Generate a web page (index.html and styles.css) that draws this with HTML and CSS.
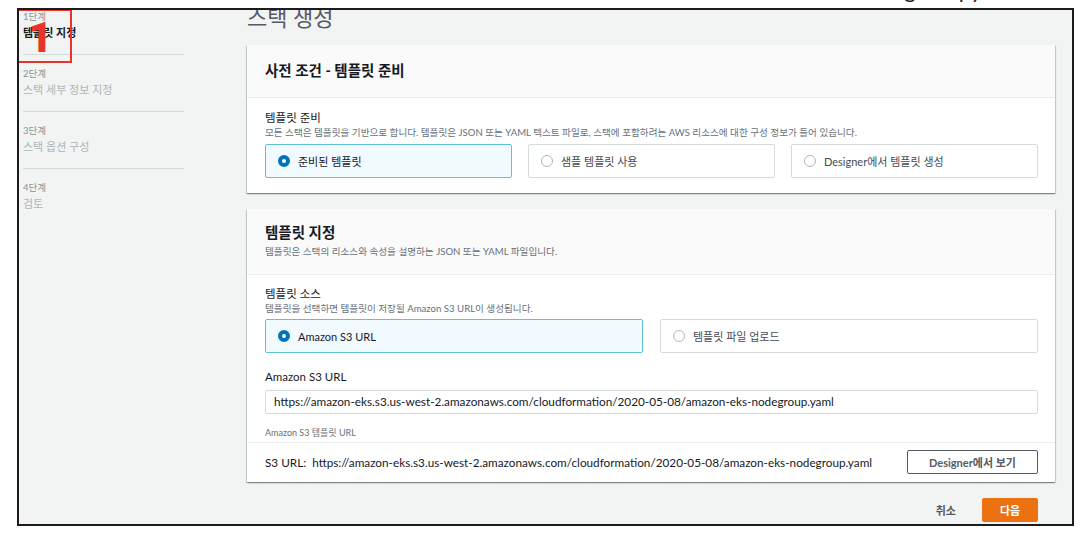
FILE: index.html
```html
<!DOCTYPE html>
<html lang="ko">
<head>
  <meta charset="UTF-8">
  <title>스택 생성</title>
  <link rel="stylesheet" href="styles.css">
</head>
<body>

  <div class="cut-line"><span>using the python</span></div>

  <div class="shot">
    <div class="marker">1</div>

    <ul class="steps">
      <li class="step active">
        <span class="step-no">1단계</span>
        <span class="step-name">템플릿 지정</span>
      </li>
      <li class="step">
        <span class="step-no">2단계</span>
        <span class="step-name">스택 세부 정보 지정</span>
      </li>
      <li class="step">
        <span class="step-no">3단계</span>
        <span class="step-name">스택 옵션 구성</span>
      </li>
      <li class="step last">
        <span class="step-no">4단계</span>
        <span class="step-name">검토</span>
      </li>
    </ul>

    <div class="main">
      <h1>스택 생성</h1>

      <section class="card">
        <div class="card-head">
          <h2>사전 조건 - 템플릿 준비</h2>
        </div>
        <div class="card-body first">
          <div class="label">템플릿 준비</div>
          <div class="hint">모든 스택은 템플릿을 기반으로 합니다. 템플릿은 JSON 또는 YAML 텍스트 파일로, 스택에 포함하려는 AWS 리소스에 대한 구성 정보가 들어 있습니다.</div>
          <div class="tiles three">
            <div class="tile selected"><span class="radio"></span>준비된 템플릿</div>
            <div class="tile"><span class="radio"></span>샘플 템플릿 사용</div>
            <div class="tile"><span class="radio"></span>Designer에서 템플릿 생성</div>
          </div>
        </div>
      </section>

      <section class="card second">
        <div class="card-head">
          <h2>템플릿 지정</h2>
          <div class="hint head-hint">템플릿은 스택의 리소스와 속성을 설명하는 JSON 또는 YAML 파일입니다.</div>
        </div>
        <div class="card-body">
          <div class="label">템플릿 소스</div>
          <div class="hint">템플릿을 선택하면 템플릿이 저장될 Amazon S3 URL이 생성됩니다.</div>
          <div class="tiles two">
            <div class="tile selected"><span class="radio"></span>Amazon S3 URL</div>
            <div class="tile"><span class="radio"></span>템플릿 파일 업로드</div>
          </div>

          <div class="label field-label">Amazon S3 URL</div>
          <div class="url-input">https://amazon-eks.s3.us-west-2.amazonaws.com/cloudformation/2020-05-08/amazon-eks-nodegroup.yaml</div>
          <div class="helper">Amazon S3 템플릿 URL</div>
        </div>
        <div class="card-foot">
          <span class="s3-url">S3 URL:&nbsp; https://amazon-eks.s3.us-west-2.amazonaws.com/cloudformation/2020-05-08/amazon-eks-nodegroup.yaml</span>
          <button class="btn-outline">Designer에서 보기</button>
        </div>
      </section>

      <div class="actions">
        <span class="cancel">취소</span>
        <button class="btn-primary">다음</button>
      </div>
    </div>
  </div>

</body>
</html>
```

FILE: styles.css
```css
body {
  margin: 0;
  background: #fff;
  font-family: 'Lato', 'Noto Sans CJK KR', sans-serif;
  color: #16191f;
}
.cut-line {
  height: 8px;
  overflow: hidden;
  padding-left: 865px;
  font-size: 22px;
  line-height: 22px;
  color: #222;
}
.cut-line span {
  display: block;
  margin-top: -21px;
}
.shot {
  margin-left: 17px;
  width: 1057px;
  height: 518px;
  box-sizing: border-box;
  border: 2px solid #1c1c1c;
  background: #f2f3f3;
  position: relative;
  overflow: hidden;
  display: flex;
  align-items: flex-start;
}
.marker {
  position: absolute;
  left: -2px;
  top: -1px;
  width: 55px;
  height: 54px;
  box-sizing: border-box;
  border: 2px solid #e8342a;
  color: #e8342a;
  font-family: 'Roboto', sans-serif;
  font-weight: 900;
  font-size: 42px;
  line-height: 1;
  display: flex;
  align-items: center;
  justify-content: center;
  padding: 4px 8px 0 0;
  z-index: 2;
}

/* wizard steps */
.steps {
  list-style: none;
  margin: -12px 0 0 4px;
  padding: 0;
  width: 161px;
  flex-shrink: 0;
}
.step {
  padding: 12px 0 13px;
  border-bottom: 1px solid #d5dbdb;
}
.step.last {
  border-bottom: none;
}
.step-no {
  display: block;
  font-size: 9.5px;
  line-height: 14px;
  color: #879596;
}
.step-name {
  display: block;
  font-size: 11px;
  line-height: 17px;
  color: #aab7b8;
}
.step.active .step-name {
  color: #16191f;
  font-weight: bold;
}

/* main column */
.main {
  margin: -7px 0 0 63px;
  width: 808px;
  flex-shrink: 0;
}
h1 {
  margin: 0;
  font-size: 22px;
  line-height: 30px;
  font-weight: normal;
  color: #545b64;
}
.card {
  margin-top: 12px;
  background: #fff;
  box-shadow: 0 1px 1px 0 rgba(0,28,36,0.3), 1px 1px 1px 0 rgba(0,28,36,0.15), -1px 1px 1px 0 rgba(0,28,36,0.15);
}
.card.second {
  margin-top: 16px;
}
.card-head {
  background: #fafafa;
  border-bottom: 1px solid #eaeded;
  padding: 16px 18px 16px;
}
.card.second .card-head {
  padding: 14px 18px 15px;
}
h2 {
  margin: 0;
  font-size: 14.5px;
  line-height: 20px;
  font-weight: bold;
  color: #16191f;
}
.card-body {
  padding: 10px 17px 3px 18px;
}
.card-body.first {
  padding: 11px 17px 15px 18px;
}
.label {
  font-size: 11.5px;
  line-height: 17px;
  color: #16191f;
}
.hint {
  font-size: 9.6px;
  line-height: 14px;
  color: #687078;
}
.head-hint {
  margin-top: 2px;
}
.tiles {
  display: grid;
  margin-top: 4px;
}
.tiles.three {
  grid-template-columns: 1fr 1fr 1fr;
  gap: 16px;
}
.tiles.two {
  margin-top: 3px;
  grid-template-columns: 1fr 1fr;
  gap: 17px;
}
.tile {
  height: 34px;
  box-sizing: border-box;
  border: 1px solid #d5dbdb;
  border-radius: 2px;
  display: flex;
  align-items: center;
  gap: 8px;
  padding: 0 12px;
  font-size: 11px;
  color: #444b53;
}
.tile.selected {
  background: #f1faff;
  border-color: #5fc0dc;
  color: #16191f;
}
.radio {
  width: 12px;
  height: 12px;
  box-sizing: border-box;
  border-radius: 50%;
  border: 1px solid #aab7b8;
  background: #fff;
  flex-shrink: 0;
}
.tile.selected .radio {
  border: 4px solid #0073bb;
}
.field-label {
  margin-top: 15px;
}
.url-input {
  margin-top: 5px;
  height: 24px;
  box-sizing: border-box;
  border: 1px solid #d5dbdb;
  border-radius: 2px;
  padding: 0 8px;
  font-size: 11.75px;
  line-height: 22px;
  color: #16191f;
}
.helper {
  margin-top: 13px;
  font-size: 9px;
  line-height: 12px;
  color: #687078;
}
.card-foot {
  border-top: 1px solid #eaeded;
  padding: 7px 17px 8px 18px;
  display: flex;
  justify-content: space-between;
  align-items: center;
}
.s3-url {
  font-size: 11.75px;
  color: #16191f;
}
.btn-outline {
  width: 131px;
  height: 24px;
  border: 1px solid #545b64;
  border-radius: 2px;
  background: #fff;
  color: #545b64;
  font-family: inherit;
  font-size: 11px;
  font-weight: bold;
  padding: 0;
}
.actions {
  margin-top: 16px;
  padding-right: 17px;
  display: flex;
  justify-content: flex-end;
  align-items: center;
  gap: 26px;
}
.cancel {
  font-size: 11px;
  font-weight: bold;
  color: #545b64;
}
.btn-primary {
  width: 56px;
  height: 24px;
  border: none;
  border-radius: 2px;
  background: #ec7211;
  color: #fff;
  font-family: inherit;
  font-size: 11px;
  font-weight: bold;
  padding: 0;
}
```
